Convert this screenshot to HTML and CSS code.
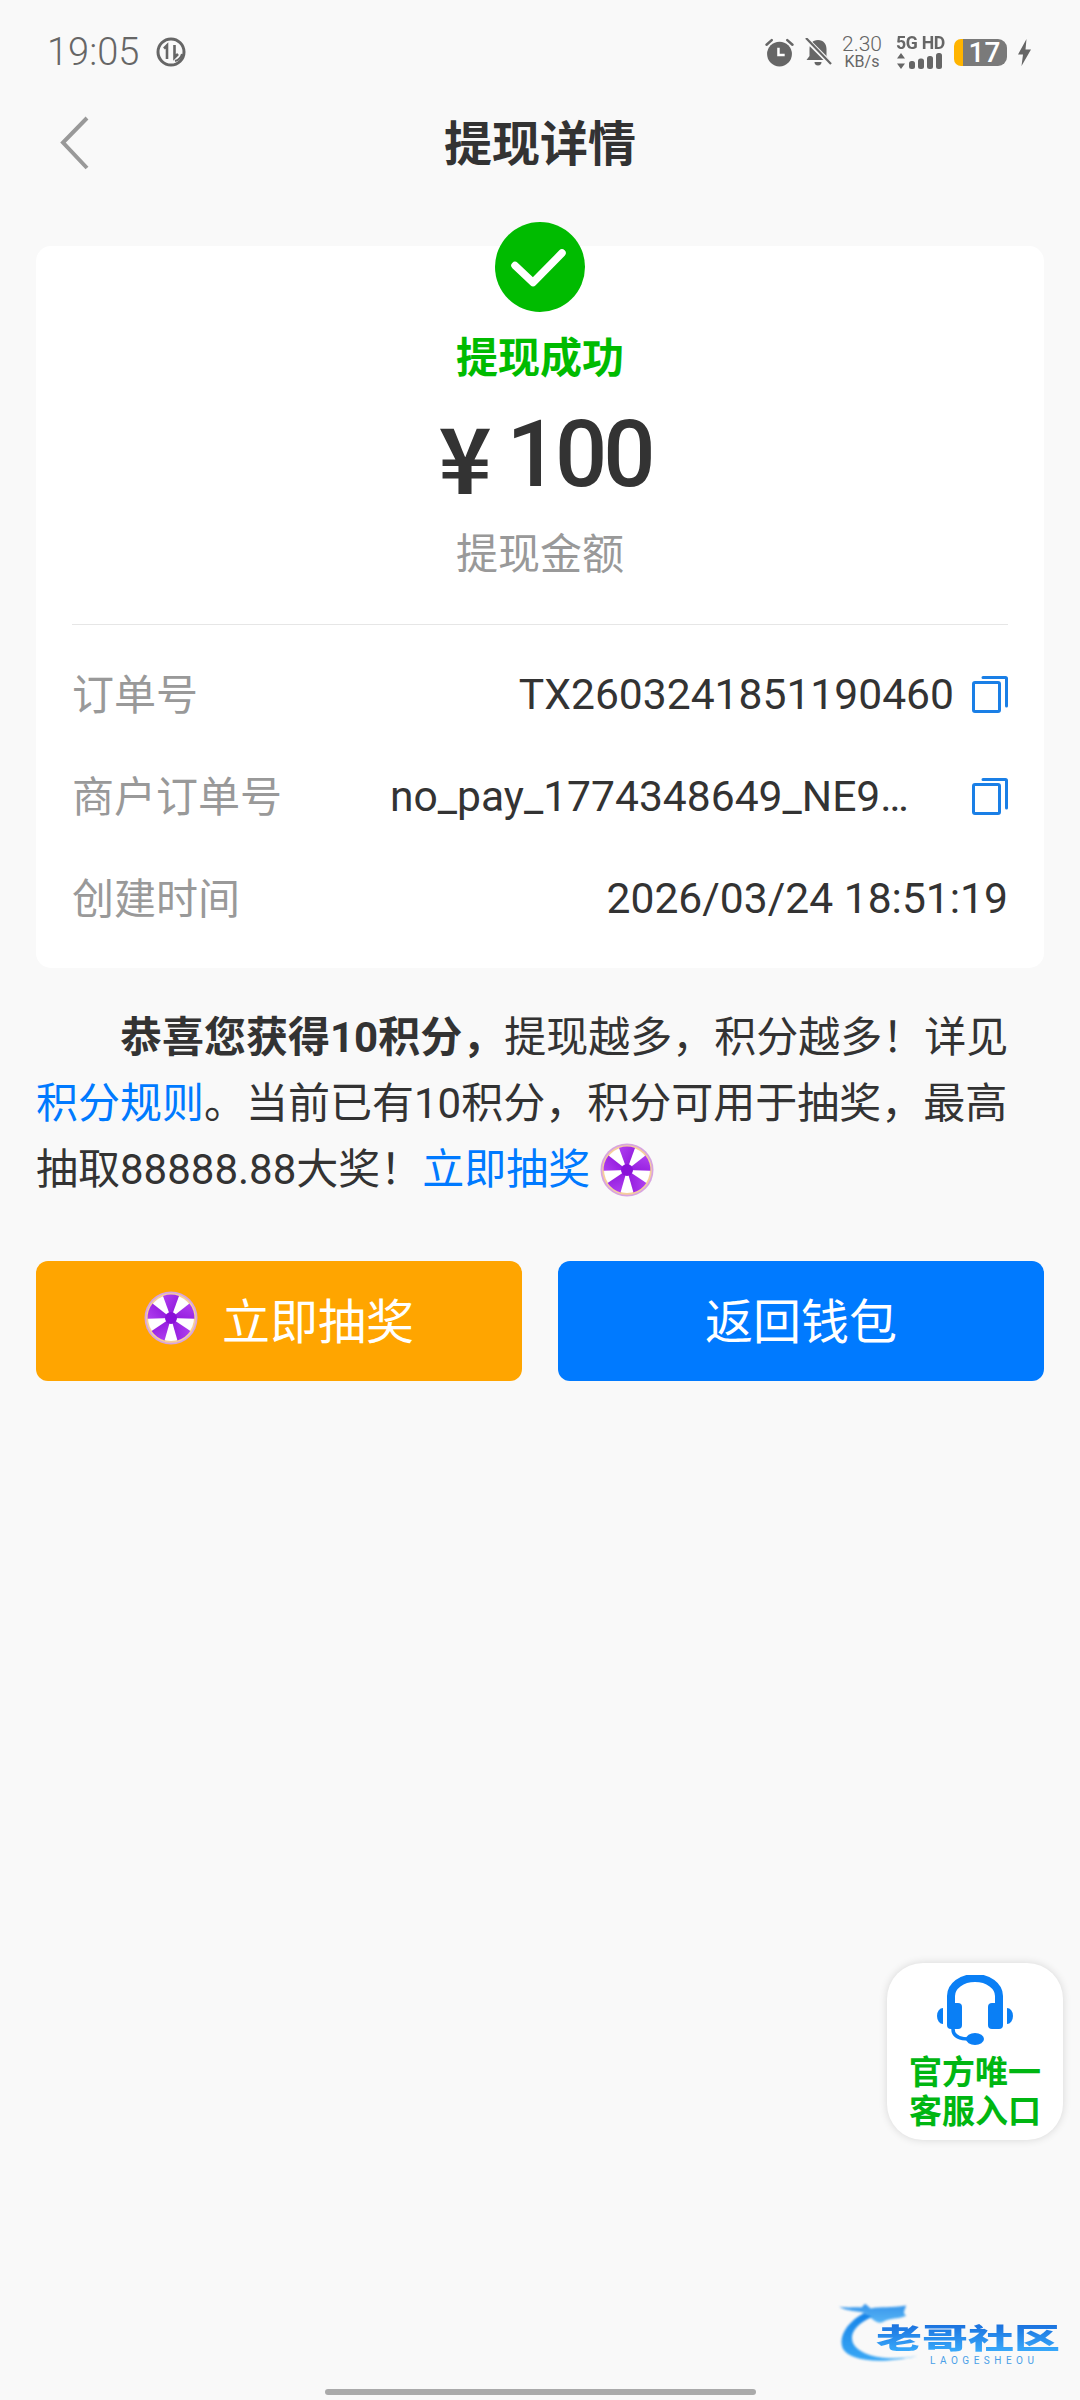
FILE: index.html
```html
<!DOCTYPE html>
<html lang="zh-CN">
<head>
<meta charset="utf-8">
<title>提现详情</title>
<link rel="stylesheet" href="styles.css">
</head>
<body>
<svg class="defs" width="0" height="0" aria-hidden="true">
  <defs>
    <linearGradient id="wg" x1="0" y1="0" x2="1" y2="1"><stop offset="0" stop-color="#b040f0"/><stop offset="1" stop-color="#8a10d8"/></linearGradient>
    <linearGradient id="dg" x1="0" y1="0" x2="0" y2="1"><stop offset="0" stop-color="#1583e8"/><stop offset="1" stop-color="#3aa8f5"/></linearGradient>
    <symbol id="wheel" viewBox="-27 -27 54 54">
      <circle r="26.500" fill="#d8a4e0"/>
      <circle r="24.800" fill="#f6cf9c"/>
      <circle r="23" fill="#fff"/>
      <g fill="url(#wg)">
        <path id="wedge" d="M0 0L-8 -22A23.500 23.500 0 0 1 8 -22Z"/>
        <use href="#wedge" transform="rotate(72)"/>
        <use href="#wedge" transform="rotate(144)"/>
        <use href="#wedge" transform="rotate(216)"/>
        <use href="#wedge" transform="rotate(288)"/>
      </g>
      <circle r="6" fill="#8a10d8"/>
    </symbol>
    <symbol id="copy" viewBox="0 0 36 38">
      <rect x="1.500" y="6.500" width="26" height="29" rx="1.500" fill="none" stroke="#1a7fe6" stroke-width="3"/>
      <path d="M11 1.500H33.500a1 1 0 0 1 1 1V30" fill="none" stroke="#1a7fe6" stroke-width="3" stroke-linecap="round"/>
    </symbol>
  </defs>
</svg>

<main class="page">
  <header class="status">
    <div class="status-left">
      <span class="clock">19:05</span>
      <svg class="st-leaf" viewBox="0 0 30 30"><circle cx="15" cy="15" r="13" fill="none" stroke="#666" stroke-width="3"/><path d="M11 22V8.500L8 11.500M18.500 8v12.500l3.500-3.500" fill="none" stroke="#666" stroke-width="2.600"/><path d="M19 24c4-1 6-3 7-7" fill="none" stroke="#666" stroke-width="2"/></svg>
    </div>
    <div class="status-right">
      <svg class="st-alarm" viewBox="0 0 28 28"><circle cx="14" cy="15.500" r="12" fill="#666"/><path d="M1.500 6.500L6.500 2M26.500 6.500L21.500 2" stroke="#666" stroke-width="2.400" stroke-linecap="round"/><path d="M13 9.500v7h6" fill="none" stroke="#fff" stroke-width="2.400"/></svg>
      <svg class="st-bell" viewBox="0 0 28 28"><path d="M14 2c5.500 0 8.500 4 8.500 9v7l3 4H2.500l3-4v-7c0-5 3-9 8.500-9zM10.500 24h7a3.500 3.500 0 0 1-7 0z" fill="#666"/><path d="M1 0L28 27" stroke="#f9f9f9" stroke-width="5"/><path d="M2 0L27 26" stroke="#666" stroke-width="2.200"/></svg>
      <div class="st-speed"><span class="st-speed-num">2.30</span><span class="st-speed-unit">KB/s</span></div>
      <div class="st-net">
        <span class="st-net-label">5G HD</span>
        <svg class="st-signal" viewBox="0 0 47 16"><path d="M5 0l4 5.500H1zM5 16l4-5.500H1z" fill="#666"/><rect x="13" y="8" width="6" height="8" rx="2.500" fill="#666"/><rect x="22" y="5.500" width="6" height="10.500" rx="2.500" fill="#666"/><rect x="31" y="3" width="6" height="13" rx="2.500" fill="#666"/><rect x="40" y="0" width="6" height="16" rx="2.500" fill="#666"/></svg>
      </div>
      <div class="st-batt"><span class="st-batt-num">17</span></div>
      <svg class="st-bolt" viewBox="0 0 13 27"><path d="M8.500 0L0 15.500h5L3.500 27 13 10.500H7.500z" fill="#666"/></svg>
    </div>
  </header>

  <nav class="nav">
    <svg class="back" viewBox="0 0 30 54"><path d="M27 2L3 26.500 27 52" fill="none" stroke="#999" stroke-width="4"/></svg>
    <h1 class="nav-title">提现详情</h1>
  </nav>

  <section class="card">
    <div class="summary">
      <svg class="ok" viewBox="0 0 90 90"><circle cx="45" cy="45" r="45" fill="#00bb00"/><path d="M20 43.500L38 60.500 67 31" fill="none" stroke="#fff" stroke-width="7.500" stroke-linecap="round" stroke-linejoin="round"/></svg>
      <div class="ok-text">提现成功</div>
      <div class="amount"><span class="yen">¥</span><span class="amount-num">100</span></div>
      <div class="amount-label">提现金额</div>
    </div>
    <div class="rows">
      <div class="row">
        <span class="row-label">订单号</span>
        <span class="row-value">TX2603241851190460</span>
        <svg class="copy"><use href="#copy"/></svg>
      </div>
      <div class="row">
        <span class="row-label">商户订单号</span>
        <span class="row-value clip">no_pay_1774348649_NE9X4KQ27</span>
        <svg class="copy"><use href="#copy"/></svg>
      </div>
      <div class="row">
        <span class="row-label">创建时间</span>
        <span class="row-value">2026/03/24 18:51:19</span>
      </div>
    </div>
  </section>

  <p class="notice"><b class="notice-strong">恭喜您获得10积分，</b>提现越多，积分越多！详见<a class="link">积分规则</a>。当前已有10积分，积分可用于抽奖，最高抽取88888.88大奖！<a class="link">立即抽奖</a><svg class="wheel wheel-inline"><use href="#wheel"/></svg></p>

  <div class="actions">
    <button class="btn btn-orange"><svg class="wheel"><use href="#wheel"/></svg><span>立即抽奖</span></button>
    <button class="btn btn-blue">返回钱包</button>
  </div>

  <aside class="kefu">
    <svg class="kefu-icon" viewBox="0 0 76 70">
      <path d="M14 33V21a24 18 0 0 1 48 0v12" fill="none" stroke="#0a7ff5" stroke-width="8"/>
      <rect x="10" y="28" width="15" height="26" rx="4" fill="#0a7ff5"/>
      <rect x="51" y="28" width="15" height="26" rx="4" fill="#0a7ff5"/>
      <path d="M6 33v16a6 8 0 0 1 0-16zM70 33v16a6 8 0 0 0 0-16z" fill="#0a7ff5"/>
      <path d="M16 54c0 7 6 10 16 10" fill="none" stroke="#0a7ff5" stroke-width="3.500"/>
      <ellipse cx="38" cy="64" rx="9" ry="6" fill="#0a7ff5"/>
    </svg>
    <div class="kefu-text">官方唯一<br>客服入口</div>
  </aside>

  <div class="brand">
    <svg class="brand-dragon" viewBox="0 0 90 75">
      <path d="M27 14C8 24 -1 40 4 52C10 64 40 70 84 60C50 66 22 60 15 46C11 36 18 26 36 18Z" fill="url(#dg)"/>
      <path d="M0 7C10 9 18 7 24 8L28 4L34 9C44 7 56 9 72 6C70 12 68 14 72 17C62 21 56 19 48 23C42 27 36 21 30 15C22 11 8 13 0 7Z" fill="url(#dg)" opacity=".85"/>
    </svg>
    <div class="brand-name">老哥社区</div>
    <div class="brand-sub">LAOGESHEOU</div>
  </div>

  <div class="home-bar"></div>
</main>
</body>
</html>
```

FILE: styles.css
```css
* { box-sizing: border-box; }
html, body { margin: 0; padding: 0; }
body {
  background: #f9f9f9;
  font-family: "Noto Sans CJK SC", "Noto Sans", sans-serif;
  color: #333;
}
.defs { position: absolute; }
.page {
  position: relative;
  width: 1080px;
  height: 2400px;
  overflow: hidden;
  background: #f9f9f9;
}

/* status bar */
.status {
  height: 100px;
  padding: 32px 49px 0 47px;
  display: flex;
  justify-content: space-between;
  align-items: flex-start;
  color: #666;
}
.status-left { display: flex; align-items: center; height: 40px; gap: 17px; }
.clock { font: 300 38px/40px Roboto, sans-serif; }
.st-leaf { width: 30px; height: 30px; }
.status-right { display: flex; align-items: center; height: 40px; }
.st-alarm { width: 29px; height: 29px; }
.st-bell { width: 28px; height: 28px; margin-left: 10px; }
.st-speed { width: 40px; margin-left: 10px; display: flex; flex-direction: column; align-items: center; }
.st-speed-num { font: 300 21px/19px Roboto, sans-serif; }
.st-speed-unit { font: 400 16px/15px Roboto, sans-serif; }
.st-net { margin-left: 14px; width: 47px; display: flex; flex-direction: column; }
.st-net-label { font: 700 18px/16px Roboto, sans-serif; letter-spacing: -.3px; white-space: nowrap; transform: scaleX(.98); transform-origin: left; }
.st-signal { width: 47px; height: 16px; margin-top: 2px; display: block; }
.st-batt {
  width: 53px; height: 27px; margin-left: 11px;
  border-radius: 7px 9px 9px 7px;
  background: linear-gradient(90deg, #ffb400 0, #ffb400 9px, #7a7a7a 9px);
  display: flex; align-items: center; justify-content: center;
  padding-left: 8px;
}
.st-batt-num { font: 500 28px/27px Roboto, sans-serif; color: #fff; }
.st-bolt { width: 13px; height: 27px; margin-left: 11px; }

/* nav */
.nav { height: 146px; display: flex; justify-content: center; position: relative; padding-top: 14px; }
.back { position: absolute; left: 60px; top: 16px; width: 30px; height: 54px; }
.nav-title { margin: 0; font-size: 48px; line-height: 52px; font-weight: 700; color: #333; }

/* card */
.card {
  margin: 0 36px;
  height: 722px;
  background: #fff;
  border-radius: 15px;
  padding: 0 36px;
}
.summary {
  height: 379px;
  border-bottom: 1px solid #e6e6e6;
  display: flex; flex-direction: column; align-items: center;
}
.ok { width: 90px; height: 90px; margin-top: -24px; flex: none; }
.ok-text { margin-top: 18px; font-size: 42px; line-height: 50px; font-weight: 700; color: #00bb00; }
.amount { margin-top: 29px; height: 92px; padding-left: 10px; display: flex; align-items: center; gap: 15px; color: #333; }
.amount-num { font: 500 92px/92px Roboto, sans-serif; letter-spacing: -4px; }
.yen { font-family: "Noto Sans CJK SC", sans-serif; font-weight: 700; font-size: 90px; line-height: 92px; }
.amount-label { margin-top: 25px; font-size: 42px; line-height: 50px; color: #999; }
.rows { display: flex; flex-direction: column; padding-top: 15px; }
.row { height: 102px; display: flex; align-items: center; justify-content: space-between; font-size: 42px; }
.row-label { color: #999; margin-right: auto; }
.row-value { color: #333; font-family: Roboto, "Noto Sans CJK SC", sans-serif; font-size: 42.600px; padding-top: 6px; white-space: nowrap; }
.clip { width: 526px; overflow: hidden; text-overflow: ellipsis; }
.copy { width: 36px; height: 38px; margin: 7px 0 0 18px; flex: none; }
.clip + .copy { margin-left: 56px; }

/* notice */
.notice {
  margin: 37px 36px 0;
  font: 42px/66px Roboto, "Noto Sans CJK SC", sans-serif;
  text-indent: 84px;
  color: #333;
}
.notice-strong { font-weight: 700; }
.link { color: #007aff; }
.wheel { width: 54px; height: 54px; flex: none; }
.wheel-inline { margin-left: 10px; vertical-align: -13px; }

/* buttons */
.actions { margin: 58px 36px 0; display: flex; gap: 36px; }
.btn {
  flex: 1;
  height: 120px;
  border: 0;
  border-radius: 12px;
  color: #fff;
  font: 48px/1 "Noto Sans CJK SC", sans-serif;
  display: flex; align-items: center; justify-content: center; gap: 24px;
  padding: 0 0 6px;
}
.btn-orange { background: #ffa500; }
.btn-blue { background: #007aff; }

/* floating service badge */
.kefu {
  position: absolute; left: 887px; top: 1963px;
  width: 176px; height: 177px;
  background: #fff; border-radius: 36px;
  box-shadow: 0 0 8px rgba(0,0,0,.14);
  display: flex; flex-direction: column; align-items: center;
  padding-top: 12px;
}
.kefu-icon { width: 76px; height: 70px; flex: none; }
.kefu-text { margin-top: 6px; font-size: 33px; line-height: 39px; font-weight: 700; color: #00b612; text-align: center; }

/* brand watermark */
.brand { position: absolute; left: 838px; top: 2300px; width: 230px; height: 72px; }
.brand-dragon { position: absolute; left: 0; top: 0; width: 86px; height: 70px; filter: blur(.8px); }
.brand-name {
  position: absolute; left: 38px; top: 7px;
  font-size: 46px; line-height: 60px; font-weight: 900; white-space: nowrap;
  background: linear-gradient(#1465d8, #3db2ff);
  -webkit-background-clip: text; background-clip: text; color: transparent;
  transform: scaleY(.62);
  filter: blur(.5px);
}
.brand-sub { position: absolute; left: 92px; top: 55px; font: 10px/12px Roboto, sans-serif; letter-spacing: 4.500px; color: #4a9fe8; white-space: nowrap; }

.home-bar { position: absolute; left: 325px; top: 2389px; width: 431px; height: 6px; border-radius: 3px; background: #aaa; }
```
